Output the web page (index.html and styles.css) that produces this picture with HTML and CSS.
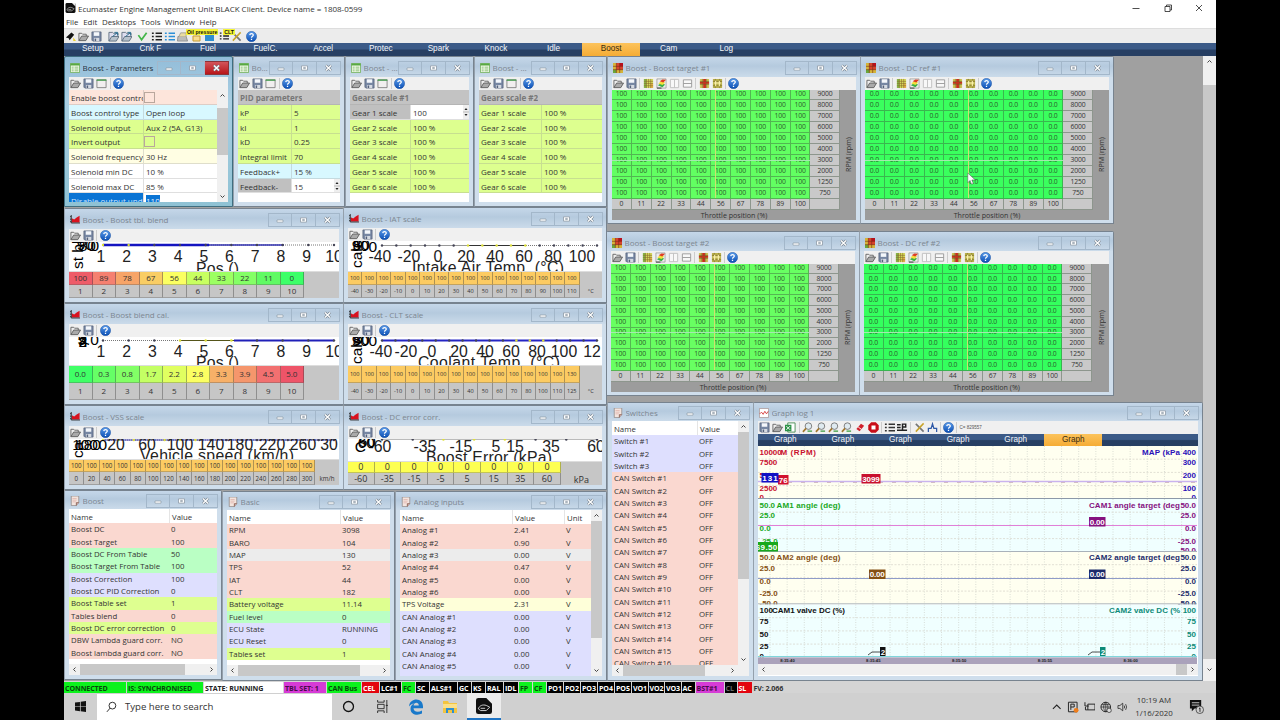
FILE: index.html
```html
<!DOCTYPE html>
<html lang="en">
<head>
  <meta charset="UTF-8">
  <title>Ecumaster Engine Management Unit BLACK Client</title>
  <link rel="stylesheet" href="styles.css">
</head>
<body>
  <svg class="defs" width="0" height="0">
    <defs>
      <linearGradient id="blueball" x1="0" y1="0" x2="0" y2="1"><stop offset="0" stop-color="#5a9bea"/><stop offset="1" stop-color="#0b4fb5"/></linearGradient>
    </defs>
    <symbol id="i-open" viewBox="0 0 12 12"><path d="M1 10.5V2.5h3l1 1h4v2" fill="#eee" stroke="#555" stroke-width=".9"/><path d="M1 10.5l3-5h7.5l-3 5z" fill="#aaa" stroke="#555" stroke-width=".9"/></symbol>
    <symbol id="i-save" viewBox="0 0 12 12"><path d="M1 1h10v10H2l-1-1z" fill="#7787a3" stroke="#556179" stroke-width=".8"/><path d="M3 1.3h6v4H3z" fill="#f4f7fb"/><path d="M3.2 7.5h5.8V11H3.2z" fill="#d5dae2"/><path d="M4 8.3h1.6V11H4z" fill="#55617a"/></symbol>
    <symbol id="i-form" viewBox="0 0 12 12"><path d="M1 2h10v8.5H1z" fill="#f1efef" stroke="#777" stroke-width=".9"/><path d="M.6 1.5h10.8v1.6H.6z" fill="#3f9d48"/></symbol>
    <symbol id="i-help" viewBox="0 0 12 12"><circle cx="6" cy="6" r="5.6" fill="url(#blueball)" stroke="#174c9b" stroke-width=".5"/><path d="M4.1 4.5C4.2 2.3 8 2.3 7.9 4.5 7.8 5.8 6 5.7 6 7.4M6 8.4v1.4" fill="none" stroke="#fff" stroke-width="1.4"/></symbol>
    <symbol id="i-grid" viewBox="0 0 12 12"><path d="M1 1h10v10H1z" fill="#d3d65a"/><path d="M1 1h3v10H1z" fill="#86b548"/><path d="M8 6h3v5H8z" fill="#e0b247"/><path d="M1 3.7h10M1 6h10M1 8.4h10M3.6 1v10M6 1v10M8.4 1v10" stroke="#8a6a2c" stroke-width=".6"/></symbol>
    <symbol id="i-3d" viewBox="0 0 12 12"><path d="M1 1h10v10H1z" fill="#eee" stroke="#777" stroke-width=".6"/><path d="M2 8l3-2 5 1-3 3z" fill="#3cae44"/><path d="M2.5 6l3-2.4L10 5 7 7.7z" fill="#f2e03a"/><path d="M4 3.5L7 1.6l4 .4-3 3z" fill="#de3d22"/><path d="M1 11h5" stroke="#333"/></symbol>
    <symbol id="i-cols" viewBox="0 0 12 12"><path d="M1.5 1.5h9v9h-9zM6 1.5v9" fill="#f8f8f8" stroke="#c0c0c0"/></symbol>
    <symbol id="i-rows" viewBox="0 0 12 12"><path d="M1.5 2h9v8h-9zM1.5 6h9" fill="#f8f8f8" stroke="#999"/></symbol>
    <symbol id="i-gridr" viewBox="0 0 12 12"><path d="M1 1h10v10H1z" fill="#cfc556"/><path d="M4.6 1h3v10h-3zM1 4h10v2.400H1z" fill="#c8301f"/><path d="M1 3.7h10M1 7h10M3.6 1v10M8.4 1v10" stroke="#6f5b22" stroke-width=".6"/></symbol>
    <symbol id="i-gridy" viewBox="0 0 12 12"><path d="M1 1h10v10H1z" fill="#b9b04a"/><path d="M3.6 1v10M8.4 1v10M1 3.7h10M1 8.4h10" stroke="#6f6222" stroke-width=".6"/><path d="M2 5.5h8M4 3v6M8 3v6" stroke="#fff6b0" stroke-width="1.2"/></symbol>
    <symbol id="i-params" viewBox="0 0 12 12"><path d="M.5.5h11v11H.5z" fill="#f3fbe9" stroke="#6eae56"/><path d="M.5.5h11V3H.5z" fill="#58a843"/><path d="M2 5h2.4M2 7.2h2.4M2 9.4h2.4M5.5 5H10M5.5 7.2H10M5.5 9.4H10" stroke="#77b565" stroke-width="1"/></symbol>
    <symbol id="i-table" viewBox="0 0 12 12"><path d="M0 0h12v12H0z" fill="#d4b43a"/><path d="M4 0h8v8H4z" fill="#d8432c"/><path d="M8 0h4v4H8z" fill="#b80f1d"/><path d="M0 8h4v4H0z" fill="#6ba73a"/><path d="M0 4h12M0 8h12M4 0v12M8 0v12" stroke="#7b2a18" stroke-width=".7"/></symbol>
    <symbol id="i-chart" viewBox="0 0 12 12"><path d="M2 4l3 1.500L8 3l3.500-2v8H2z" fill="#d8121f"/><path d="M1.500 0v9.600H12M0 2h1.500M0 5h1.500M0 8h1.500" stroke="#222" stroke-width="1" fill="none"/></symbol>
    <symbol id="i-list" viewBox="0 0 12 12"><path d="M1.5 0h9v8l-3 3.5h-6z" fill="#f3e4de" stroke="#857b78" stroke-width=".8"/><path d="M10.5 8H7.6v3.5" fill="#caa" stroke="#743" stroke-width=".8"/><path d="M3 3h5M3 5h5M3 7h4" stroke="#dba49b" stroke-width=".7"/></symbol>
    <symbol id="i-graph" viewBox="0 0 12 12"><path d="M.5.5h11v11H.5z" fill="#fff" stroke="#a99"/><path d="M1 7l2-2 2 2.6L7 4l2 3 2-3" fill="none" stroke="#d22b2b"/></symbol>
    <symbol id="i-xls" viewBox="0 0 12 12"><path d="M3 1h8v10H3z" fill="#fff" stroke="#4a8d55"/><path d="M0 3h7v7H0z" fill="#2c9247"/><path d="M1.5 4.5l4 4M5.5 4.5l-4 4" stroke="#fff"/></symbol>
    <symbol id="i-zoom" viewBox="0 0 12 12"><circle cx="7" cy="4.5" r="3.6" fill="#dfeaf0" stroke="#777"/><path d="M4.4 7L1 10.8" stroke="#a2772c" stroke-width="1.8"/><path d="M6 10h5" stroke="#3b9b3d" stroke-width="1.5"/></symbol>
    <symbol id="i-erase" viewBox="0 0 12 12"><path d="M1.5 7.5l5-5.5 3.5 2-5 6z" fill="#d01f2a"/><path d="M3.5 5.5L7 8" stroke="#fff"/></symbol>
    <symbol id="i-stop" viewBox="0 0 12 12"><path d="M3.5.3h5l3.2 3.2v5l-3.2 3.2h-5L.3 8.500v-5z" fill="#c90d17"/><path d="M3.8 3.800h4.400v4.400H3.800z" fill="#fff"/></symbol>
    <symbol id="i-bullets" viewBox="0 0 12 12"><path d="M1 2.500h2M1 6h2M1 9.500h2M5 2.500h7M5 6h7M5 9.500h7" stroke="currentColor" stroke-width="1.600"/></symbol>
    <symbol id="i-pmark" viewBox="0 0 12 12"><path d="M0 3h4M0 6h4M0 9h11M6 9V2.300h3.500v3.200H6" fill="none" stroke="#222" stroke-width="1.600"/></symbol>
    <symbol id="i-tools" viewBox="0 0 12 12"><path d="M2 2l8.500 8.500" stroke="#777" stroke-width="1.800"/><path d="M10.500 1.500L2 10.500" stroke="#c8a32a" stroke-width="1.600"/></symbol>
    <symbol id="i-node" viewBox="0 0 12 12"><path d="M1.500 11V7h3L6 2l1.500 5h3v4" fill="none" stroke="#315ba8" stroke-width="1.400"/></symbol>
    <symbol id="i-brush" viewBox="0 0 12 12"><path d="M1 7l6-5.500 3 2.500-5 6-1-2z" fill="#111"/><path d="M9 7l3 4H9z" fill="#e9cf2b"/></symbol>
    <symbol id="i-openb" viewBox="0 0 12 12"><path d="M1 11V1.500h4l1 1h5V5" fill="#dde" stroke="#567" stroke-width=".9"/><path d="M1 11l3-5h8l-3 5z" fill="#b7c2cc" stroke="#567" stroke-width=".9"/><path d="M5 6l5-4M7 1.500h3.500V5" stroke="#21688c" fill="none"/></symbol>
    <symbol id="i-check" viewBox="0 0 12 12"><path d="M1.500 4.500l3.500 5L10.500 2" fill="none" stroke="#43b649" stroke-width="1.900"/></symbol>
    <symbol id="i-log" viewBox="0 0 12 12"><path d="M1 6h9l1.500 5H.500z" fill="#bbb" stroke="#777" stroke-width=".7"/><path d="M2 6l2-4h6v4" fill="#e8dba5" stroke="#888" stroke-width=".7"/></symbol>
    <symbol id="i-ecu" viewBox="0 0 14 14"><rect width="14" height="14" rx="2" fill="#111"/><path d="M9 0h5v5z" fill="#eee"/><path d="M2 9.500c1-3 4-4 7-3l3 1.500-3 3H4zM4 9h4" fill="none" stroke="#ddd" stroke-width=".8"/></symbol>
  </svg>

  <div class="app">
    <div class="caption">
      <svg class="app-icon"><use href="#i-ecu"/></svg>
      <span class="caption-text">Ecumaster Engine Management Unit BLACK Client. Device name = 1808-0599</span>
      <div class="caption-buttons">
        <svg viewBox="0 0 10 10"><path d="M1.500 5.500h7" stroke="#222" stroke-width=".8"/></svg>
        <svg viewBox="0 0 10 10"><path d="M2 3.500h5v5H2zM3.500 3.500V2h5v5H7" fill="none" stroke="#222" stroke-width=".8"/></svg>
        <svg viewBox="0 0 10 10"><path d="M2 2l6 6M8 2L2 8" stroke="#222" stroke-width=".8"/></svg>
      </div>
    </div>
    <div class="menu"><span>File</span><span>Edit</span><span>Desktops</span><span>Tools</span><span>Window</span><span>Help</span></div>
    <div class="main-tools">
      <svg><use href="#i-brush"/></svg><svg><use href="#i-open"/></svg><svg><use href="#i-save"/></svg>
      <i></i><svg><use href="#i-openb"/></svg><svg><use href="#i-openb"/></svg><i></i>
      <svg><use href="#i-check"/></svg><svg class="dark"><use href="#i-bullets"/></svg><svg class="blue"><use href="#i-bullets"/></svg>
      <svg><use href="#i-log"/></svg>
      <div class="tagged"><svg viewBox="0 0 24 12"><path d="M1 6h7v5H1z" fill="#f8dc90" stroke="#c79b33"/><path d="M13 4h9v7h-9z" fill="#2f8fd0"/></svg><b>Oil pressure</b></div>
      <div class="tagged tag-clt"><svg viewBox="0 0 12 12" class="dark"><use href="#i-bullets"/></svg><b>CLT</b></div>
      <svg><use href="#i-tools"/></svg><i></i><svg class="help"><use href="#i-help"/></svg>
    </div>
    <div class="tabs">
      <span>Setup</span><span>Cnk F</span><span>Fuel</span><span>FuelC.</span><span>Accel</span><span>Protec</span><span>Spark</span><span>Knock</span><span>Idle</span><span class="on">Boost</span><span>Cam</span><span>Log</span>
    </div>
    <div class="workspace">
      <div class="desk" id="desk"></div>
      <div class="vscroll desk-scroll"></div>
    </div>
    <div class="status" id="status"></div>
    <div class="taskbar">
      <div class="start"><svg viewBox="0 0 12 12"><path d="M0 1.700L5.400 1v4.700H0zM6.200.900L12 0v5.700H6.200zM0 6.400h5.400v4.700L0 10.400zM6.200 6.400H12V12l-5.800-.8z" fill="#111"/></svg></div>
      <div class="search">
        <svg viewBox="0 0 12 12"><circle cx="7" cy="4.500" r="3.700" fill="none" stroke="#222"/><path d="M4.500 7.200L1 11.300" stroke="#222"/></svg>
        <span>Type here to search</span>
      </div>
      <div class="task"><svg viewBox="0 0 12 12"><circle cx="6" cy="6" r="4.600" fill="none" stroke="#111" stroke-width="1.200"/></svg></div>
      <div class="task"><svg viewBox="0 0 12 12"><path d="M1.500 4h6v4h-6zM1.500 0v2h6V0M1.500 12v-2h6v2M10 0v12M9 5h2" fill="none" stroke="#222" stroke-width=".8"/></svg></div>
      <div class="task"><svg class="big" viewBox="0 0 16 16"><path d="M1 7.500C1.500 2.500 5 .5 8.300.5c4.200 0 6.700 3 6.700 7v1.800H5.500c.2 4 5 4.300 8.500 2.300v3C9 17 2.500 15.500 2.500 9.700c0-2.700 1.600-4.400 3.700-5.200C4 4.700 2 6 1 7.500zM5.600 6.500h5.200c0-3.800-5-3.400-5.200 0z" fill="#1979ca"/></svg></div>
      <div class="task"><svg class="big" viewBox="0 0 16 16"><path d="M1 2h5l1 2h8v10H1z" fill="#f3c440"/><path d="M1 5h14v4H1z" fill="#fbe08a"/><path d="M4 9h8v5h-2v-3H6v3H4z" fill="#2f8fd0"/></svg></div>
      <div class="task active"><svg class="big" viewBox="0 0 14 14"><use href="#i-ecu"/></svg></div>
      <div class="tray">
        <svg viewBox="0 0 12 12"><path d="M2 8l4-4 4 4" fill="none" stroke="#222" stroke-width="1.100"/></svg>
        <svg viewBox="0 0 12 12"><path d="M1.500 1h9v10h-9zM4 9V3h3.500v3H4" fill="none" stroke="#222"/><circle cx="9.500" cy="9.500" r="2.500" fill="#ef7d1a"/></svg>
        <svg viewBox="0 0 12 12"><path d="M4 3h7.500v6H4zM1 1v4h4M1.500 6v3H4" fill="none" stroke="#222"/></svg>
        <svg viewBox="0 0 12 12"><circle cx="6" cy="6" r="5" fill="none" stroke="#222"/><path d="M1 6h10M6 1v10M6 1C3 4 3 8 6 11M6 1c3 3 3 7 0 10M2 3.500h8" fill="none" stroke="#222" stroke-width=".7"/><circle cx="9.500" cy="9.500" r="2.300" fill="#ddd" stroke="#222" stroke-width=".7"/></svg>
        <svg viewBox="0 0 12 12"><path d="M1 4.500h2L6 2v8L3 7.500H1zM7.500 4.500q1 1.500 0 3M9 3q2 3 0 6" fill="none" stroke="#222" stroke-width=".8"/></svg>
      </div>
      <div class="clock"><span>10:19 AM</span><span>1/16/2020</span></div>
      <div class="notify"><svg viewBox="0 0 16 16"><path d="M1 1h12v9H6l-3 3v-3H1z" fill="#111"/><path d="M3 4h8M3 6.500h8" stroke="#ccc"/><circle cx="11.500" cy="11.500" r="4" fill="#d0d0d0" stroke="#333" stroke-width=".8"/><path d="M10.600 10.300l1.100-.8v4.200" stroke="#222" fill="none"/></svg></div>
    </div>
  </div>
  <svg class="cursor" viewBox="0 0 12 18"><path d="M1 1v13l3-3 2 5 2.500-1-2-4.700H11z" fill="#fff" stroke="#555" stroke-width=".7"/></svg>
  <script src="script.js"></script>
</body>
</html>
```

FILE: styles.css
```css
* {
  box-sizing: border-box;
}
body {
  margin: 0;
  width: 1280px;
  height: 720px;
  overflow: hidden;
  background: #000;
  font-family: "Open Sans", "Noto Sans", sans-serif;
  font-size: 8px;
  color: #333;
}
.defs {
  position: absolute;
}
.app {
  width: 1152px;
  height: 720px;
  margin: 0 auto;
  display: flex;
  flex-direction: column;
  background: #fff;
}
.app > div {
  flex: none;
  white-space: nowrap;
}

/* caption, menu, toolbar */
.caption {
  height: 16px;
  display: flex;
  align-items: center;
  padding-left: 1px;
}
.app-icon {
  width: 11px;
  height: 10px;
}
.caption-text {
  margin-left: 2px;
  font-size: 8px;
  letter-spacing: -0.02px;
}
.caption-buttons {
  margin-left: auto;
  margin-right: 12px;
  display: flex;
  gap: 21.5px;
}
.caption-buttons svg {
  width: 10px;
  height: 10px;
}
.menu {
  height: 12px;
  line-height: 13px;
  padding-left: 2px;
  display: flex;
  gap: 4.7px;
  font-size: 7.9px;
}
.main-tools {
  height: 15px;
  background: #ececec;
  border-top: 1px solid #ddd;
  display: flex;
  align-items: center;
  gap: 2.2px;
  padding-left: 1px;
}
.main-tools > svg {
  width: 11px;
  height: 11px;
}
.main-tools i {
  width: 1px;
  height: 11px;
}
.main-tools > .help {
  margin-left: -2px;
}
.dark {
  color: #222;
}
.blue {
  color: #2c8fd8;
}
.tagged {
  position: relative;
  width: 24px;
  height: 12px;
  margin-left: 2px;
}
.tagged svg {
  width: 24px;
  height: 12px;
}
.tagged b {
  position: absolute;
  left: -6px;
  top: -1px;
  padding: 0 1px;
  background: #f4f435;
  font: bold 5.2px/6px "Liberation Sans", sans-serif;
  color: #111;
}
.tag-clt {
  width: 10px;
  margin-left: 1px;
}
.tag-clt svg {
  width: 10px;
}
.tag-clt b {
  left: 4px;
}
.tabs {
  height: 13px;
  display: flex;
  background: linear-gradient(#3b5a87 45%, #273f63 55%);
  font: 8.2px/11px "Liberation Sans", sans-serif;
  color: #f4f6fa;
}
.tabs span {
  width: 57.6px;
  text-align: center;
}
.tabs .on {
  background: linear-gradient(#fcc35c, #f5ac35);
  color: #3a2c10;
}

/* desktop and child windows */
.workspace {
  height: 625px;
  display: flex;
  background: #a0a0a0;
}
.desk {
  position: relative;
  flex: 1;
  overflow: hidden;
}
.win {
  position: absolute;
  display: flex;
  flex-direction: column;
  padding: 0 4px 4px;
  background: #cfdeec;
  border: 1px solid #77838f;
  border-left-color: #94a0ac;
  border-radius: 2px 2px 0 0;
  overflow: hidden;
}
.win-map {
  padding-bottom: 3px;
}
.win-active {
  background: linear-gradient(#93bdd9, #a8cee2 30%, #8fc2d4);
  border-color: #3f6e80;
}
.win-title {
  flex: none;
  display: flex;
  align-items: center;
  margin: 0 -4px;
  padding: 2px 3px 0 5px;
  background: linear-gradient(#c5d7e9, #b5cade 45%, #cbdbea);
  color: #7d8791;
  font-size: 8px;
  line-height: 12px;
}
.win-active .win-title {
  background: none;
  color: #2a3440;
}
.win-title > svg {
  flex: none;
  width: 10px;
  height: 10px;
}
.win-title > span {
  flex: 1;
  min-width: 0;
  margin-left: 2.5px;
  overflow: hidden;
  text-overflow: ellipsis;
  letter-spacing: -.04px;
}
.win-buttons {
  display: flex;
}
.win-buttons svg {
  width: 24px;
  height: 14px;
  border: 1px solid #a3b7ca;
  border-left-width: 0;
}
.win-buttons svg:first-child {
  border-left-width: 1px;
}
.win-active .win-buttons svg:last-child {
  background: linear-gradient(#d2555a, #b81519);
  border-color: #8c3338;
}
.tools {
  flex: none;
  height: 13px;
  background: #f0f0f0;
  display: flex;
  align-items: center;
  gap: 2.2px;
  padding-left: 1px;
}
.tools svg {
  width: 11px;
  height: 11px;
}
.tools i {
  width: 1px;
  height: 11px;
  background: #ccc;
}
.tools small {
  font: 4.5px "Liberation Sans", sans-serif;
  color: #555;
}
.body {
  flex: 1;
  min-height: 0;
  display: flex;
  overflow: hidden;
  background: #fff;
}

/* scrollbars */
.vscroll {
  flex: none;
  width: 11px;
  background: #f0f0f0;
  display: flex;
  flex-direction: column;
  align-items: center;
}
.vscroll svg, .hscroll svg {
  flex: none;
  width: 11px;
  height: 11px;
}
.thumb {
  background: #c8c8c8;
}
.vscroll .thumb {
  width: 100%;
}
.hscroll {
  flex: none;
  height: 11px;
  background: #f0f0f0;
  display: flex;
}
.spacer {
  flex: 1;
}
.desk-scroll {
  width: 13px;
}
.desk-scroll .thumb {
  flex: none;
  height: 574px;
  margin: 18px 0 5px;
}

/* parameter grids */
.params {
  flex: 1;
  min-width: 0;
}
.prow {
  display: flex;
  height: 14.75px;
  line-height: 15px;
  border-bottom: 1px solid rgba(150, 150, 150, .3);
}
.prow > span {
  overflow: hidden;
  padding-left: 2px;
}
.prow > span + span {
  flex: 1;
  border-left: 1px solid rgba(150, 150, 150, .3);
}
.phead {
  background: #c3c3c3;
  color: #777;
  font-weight: bold;
}
.lime { background: #ddff8f; }
.cyan { background: #d8f8ff; }
.rose { background: #fde5db; }
.cream { background: #fffee3; }
.edit > span:first-child { background: #c0c0c0; }
.edit > span:last-child { background: #fff; display: flex; justify-content: space-between; }
.edit > span:last-child svg { width: 6px; height: 14px; }
.picked { background: #0a74d4; color: #cfe6ff; }
.picked > span + span { background: #fff; }
.picked b { background: #0a74d4; color: #eaf4ff; font-weight: normal; }
.box {
  display: inline-block;
  width: 11px;
  height: 11px;
  margin-top: 2px;
  margin-left: -2px;
  border: 1px solid #b9a79d;
}

/* 3d maps */
.map {
  flex: 1;
  position: relative;
  display: flex;
  flex-direction: column;
  background: #9c9c9c;
  font-size: 6.8px;
}
.map-grid {
  flex: 1;
  display: grid;
  grid-template-columns: repeat(10, 19.85px) 30px;
  grid-template-rows: .9fr;
  grid-auto-rows: 1fr;
  justify-content: start;
}
.map-grid span {
  display: flex;
  align-items: center;
  justify-content: center;
  border-right: 1px solid rgba(60, 80, 60, .42);
  border-bottom: 1px solid rgba(60, 80, 60, .42);
  color: #2c5c2c;
  overflow: hidden;
  line-height: 8px;
  letter-spacing: -.15px;
}
.map-grid .axis {
  background: #c9c9c9;
  color: #333;
}
.map-foot {
  height: 10.5px;
  line-height: 11px;
  text-align: center;
  font-size: 7.1px;
}
.map-side {
  position: absolute;
  right: 1px;
  top: 0;
  bottom: 0;
  width: 13px;
  writing-mode: vertical-rl;
  transform: rotate(180deg);
  text-align: center;
  line-height: 13px;
  font-size: 7.1px;
}
.cross-v {
  position: absolute;
  left: 103px;
  top: 0;
  width: 1px;
  bottom: 22px;
  background: #d0e070;
}
.cross-h {
  position: absolute;
  left: 0;
  top: 53.5%;
  height: 1px;
  width: 198px;
  background: #a5e8b0;
}

/* 2d curves */
.curve {
  flex: 1;
  display: flex;
  flex-direction: column;
  background: #fff;
}
.curve svg {
  flex: 1;
  min-height: 0;
  width: 100%;
}
.curve-table {
  display: grid;
  flex: none;
  background: #c6c6c6;
  border-top: 1px solid #ddd;
}
.curve-table span {
  display: flex;
  align-items: center;
  justify-content: center;
  border-right: 1px solid rgba(60, 60, 60, .4);
  border-bottom: 1px solid rgba(90, 90, 90, .35);
  overflow: hidden;
}
.curve-table .unit {
  border: 0;
}

/* channel lists */
.list {
  flex: 1;
  min-width: 0;
  min-height: 0;
  display: flex;
  flex-direction: column;
  overflow: hidden;
}
.list-row {
  flex: 1;
  min-height: 0;
  display: flex;
}
.lhead, .lrow {
  display: grid;
  flex: none;
  height: 12.35px;
  line-height: 12px;
  font-size: 7.8px;
}
.lhead {
  height: 14.2px;
  line-height: 16px;
}
.lhead span, .lrow span {
  padding-left: 2px;
}
.lhead span + span {
  border-left: 1px solid #e5e5e5;
}
.r { background: #fad8d0; }
.g { background: #baffc4; }
.b { background: #dedffe; }
.l { background: #deff90; }
.w { background: #ececec; }
.y { background: #feffd9; }

/* log graph */
.graph {
  flex: 1;
  display: flex;
  flex-direction: column;
}
.graph .tabs {
  flex: none;
  height: 12px;
}
.graph .tabs span:first-child {
  margin-left: -1.5px;
}
.graph > svg {
  width: 439px;
  height: 218px;
}
.graph text {
  font-family: "Liberation Sans", sans-serif;
  font-weight: bold;
  font-size: 8px;
}

/* status strip and taskbar */
.status {
  height: 12px;
  padding-top: 1px;
  background: #d4d4d4;
  display: flex;
  gap: 1px;
}
.status span {
  flex: none;
  height: 11px;
  overflow: hidden;
  padding-left: 1px;
  font: bold 7.1px/12px "Open Sans", sans-serif;
  letter-spacing: -.1px;
}
.s-g { background: #0cf21c; color: #064a0a; }
.s-w { background: #fff; color: #222; }
.s-p { background: #d63bd6; color: #4a0b4a; }
.s-r { background: #e3050f; color: #fff; }
.s-k { background: #000; color: #fff; }
.s-d { background: #000; color: #666; }
.s-n { color: #333; }
.taskbar {
  height: 27px;
  background: #d0d0d0;
  display: flex;
  align-items: center;
}
.start {
  width: 33px;
  display: flex;
  justify-content: center;
}
.start svg {
  width: 11px;
  height: 11px;
}
.search {
  width: 235px;
  height: 26px;
  background: #fff;
  display: flex;
  align-items: center;
  gap: 8px;
  padding-left: 9px;
  font-size: 9.6px;
}
.search svg {
  width: 11px;
  height: 12px;
}
.task {
  width: 33.8px;
  height: 27px;
  display: flex;
  align-items: center;
  justify-content: center;
}
.task svg {
  width: 13px;
  height: 13px;
}
.task .big {
  width: 16px;
  height: 16px;
}
.active {
  background: #ececec;
  border-bottom: 2px solid #1f74c4;
}
.tray {
  margin-left: auto;
  display: flex;
  gap: 5px;
}
.tray svg {
  width: 11.5px;
  height: 12px;
}
.clock {
  width: 52px;
  display: flex;
  flex-direction: column;
  align-items: center;
  line-height: 13px;
  font-size: 7.9px;
}
.notify {
  width: 36px;
  padding-right: 4px;
  display: flex;
  justify-content: center;
}
.notify svg {
  width: 15px;
  height: 15px;
}
.cursor {
  position: absolute;
  left: 967px;
  top: 172px;
  width: 9px;
  height: 14px;
}
```

FILE: script.js
```javascript
const desk = document.getElementById('desk');
const use = (id) => `<svg><use href="#i-${id}"/></svg>`;
const arrow = (d) => `<svg viewBox="0 0 11 11"><path d="${d}" fill="none" stroke="#444"/></svg>`;
const UP = arrow('M3.500 6.500l2-2 2 2');
const DOWN = arrow('M3.500 4.500l2 2 2-2');
const LEFT = arrow('M6.500 3.500l-2 2 2 2');
const RIGHT = arrow('M4.500 3.500l2 2-2 2');
const spin = '<svg viewBox="0 0 6 14"><path d="M0 0h6v14H0z" fill="#eee"/><path d="M0 7h6" stroke="#bbb"/><path d="M1.500 5L3 3l1.500 2zM1.500 9L3 11l1.500-2z" fill="#222"/></svg>';

// x, y are screen coordinates of the frame; the desk starts at 64, 56
function win(x, y, w, h, titleH, icon, title, tools, body, cls = '') {
  const bar = tools ? `<div class="tools">${tools}</div>` : '';
  desk.insertAdjacentHTML('beforeend', `
    <div class="win ${cls}" style="left:${x - 64}px;top:${y - 56}px;width:${w}px;height:${h}px">
      <div class="win-title" style="height:${titleH}px">${use(icon)}<span>${title}</span>
        <div class="win-buttons">
          <svg viewBox="0 0 24 14"><path d="M8.500 7h7v2.500h-7z" fill="#fff" stroke="#8b98a5" stroke-width=".8"/></svg>
          <svg viewBox="0 0 24 14"><path d="M8.500 4.500h7v5h-7zM11 6.300h2v1.400h-2z" fill="#fff" stroke="#8b98a5" stroke-width=".9"/></svg>
          <svg viewBox="0 0 24 14"><path d="M9 4l6 6M15 4l-6 6" stroke="#77838f" stroke-width="3"/><path d="M9 4l6 6M15 4l-6 6" stroke="#fff" stroke-width="1.500"/></svg>
        </div>
      </div>${bar}<div class="body">${body}</div>
    </div>`);
}

const paramTools = use('open') + use('save') + use('form') + '<i></i>' + use('help');
const curveTools = use('open') + use('save') + '<i></i>' + use('help');
const mapTools = use('open') + use('save') + '<i></i>' + use('grid') + use('3d') + use('cols') + use('rows') +
  '<i></i>' + use('gridr') + use('gridy') + '<i></i>' + use('help');

function params(rows, col, scroll = '') {
  return '<div class="params">' + rows.map(([cls, name, value]) => value === undefined
    ? `<div class="prow phead"><span>${name}</span></div>`
    : `<div class="prow ${cls}"><span style="width:${col}px">${name}</span><span>${value}${cls === 'edit' ? spin : ''}</span></div>`
  ).join('') + '</div>' + scroll;
}

const vscroll = (before, size) => `<div class="vscroll">${UP}<div class="thumb" style="height:${size}px;margin-top:${before}px"></div><div class="spacer"></div>${DOWN}</div>`;

win(64, 56, 169, 151, 20, 'params', 'Boost - Parameters', paramTools, params([
  ['rose', 'Enable boost control', '<i class="box"></i>'],
  ['cyan', 'Boost control type', 'Open loop'],
  ['lime', 'Solenoid output', 'Aux 2 (5A, G13)'],
  ['lime', 'Invert output', '<i class="box"></i>'],
  ['cream', 'Solenoid frequency', '30 Hz'],
  ['', 'Solenoid min DC', '10 %'],
  ['', 'Solenoid max DC', '85 %'],
  ['picked', 'Disable output under', '<b>110</b>']
], 74, vscroll(7, 47)), 'win-active');
win(233, 56, 112, 151, 20, 'params', 'Boost - PID', paramTools, params([
  ['', 'PID parameters'], ['lime', 'kP', '5'], ['lime', 'kI', '1'], ['lime', 'kD', '0.25'],
  ['lime', 'Integral limit', '70'], ['cyan', 'Feedback+', '15 %'], ['edit', 'Feedback-', '15']
], 53));
const gears = [2, 3, 4, 5, 6].map(n => ['lime', `Gear ${n} scale`, '100 %']);
win(345, 56, 129, 151, 20, 'params', 'Boost - Gears scale', paramTools,
  params([['', 'Gears scale #1'], ['edit', 'Gear 1 scale', '100'], ...gears], 60));
win(474, 56, 133, 151, 20, 'params', 'Boost - Gears scale', paramTools,
  params([['', 'Gears scale #2'], ['lime', 'Gear 1 scale', '100 %'], ...gears], 62));

function map(value, color) {
  const rpm = [9000, 8000, 7000, 6000, 5000, 4000, 3000, 2000, 1250, 750];
  let cells = rpm.map(r => `<span style="background:${color}">${value}</span>`.repeat(10) + `<span class="axis">${r}</span>`).join('');
  cells += [0, 11, 22, 33, 44, 56, 67, 78, 89, 100, ''].map(t => `<span class="axis">${t}</span>`).join('');
  return `<div class="map"><div class="map-grid">${cells}</div><div class="map-foot">Throttle position (%)</div>
    <div class="map-side">RPM (rpm)</div><div class="cross-v"></div><div class="cross-h"></div></div>`;
}
win(607, 56, 254, 168, 20, 'table', 'Boost - Boost target #1', mapTools, map('100', '#62ff62'), 'win-map');
win(860, 56, 254, 168, 20, 'table', 'Boost - DC ref #1', mapTools, map('0.0', '#3aff5e'), 'win-map');
win(606, 231, 254, 165, 19, 'table', 'Boost - Boost target #2', mapTools, map('100', '#68ff62'), 'win-map');
win(859, 231, 255, 165, 19, 'table', 'Boost - DC ref #2', mapTools, map('0.0', '#34ff5e'), 'win-map');

// svg coordinates inside a curve are pixels from its top left corner
function curve(o) {
  const label = (t, x) => `<text x="${x}" y="${o.base}" font-size="15.800" text-anchor="middle">${t}</text>`;
  let s = `<svg font-family="Liberation Sans" fill="#222"><path d="M34 ${o.line}H${o.end}" stroke="#777" stroke-dasharray="1 1"/>`;
  o.strokes.forEach(([a, b, c, t]) => { s += `<path d="M${a} ${o.line}H${b}" stroke="${c}" stroke-width="${t || 1.500}"/>`; });
  for (let i = 0; i < o.n; i++) {
    const x = 34 + (o.end - 34) * i / (o.n - 1);
    s += `<circle cx="${x}" cy="${o.line}" r="1.200" fill="${o.yellow.includes(i) ? '#dddf3a' : '#445'}"/>`;
  }
  s += o.labels.map(l => label(...l)).join('');
  s += `<text x="${o.name[1]}" y="${o.nameY}" font-size="15.800" textLength="${o.name[2]}">${o.name[0]}</text>`;
  o.blob.forEach(([t, x, y]) => { s += `<text x="${x}" y="${y}" font-size="15.500" text-anchor="end" fill="#000">${t}</text>`; });
  s += `<text transform="translate(13.500 ${o.sideY || 27}) rotate(-90)" font-size="15.500" fill="#000">${o.side}</text></svg>`;
  const cols = `repeat(${o.values.length}, ${o.cw}px) 1fr`;
  s += `<div class="curve-table" style="grid-template-columns:${cols};grid-template-rows:${o.rows[0]}px ${o.rows[1]}px;font-size:${o.fs}px">`;
  s += o.values.map((v, i) => `<span style="background:${o.colors[i] || o.colors[0]}">${v}</span>`).join('') + '<span class="unit"></span>';
  s += o.axis.map(v => `<span>${v}</span>`).join('') + `<span class="unit">${o.unit || ''}</span></div>`;
  return `<div class="curve">${s}</div>`;
}

const heat = ['#ee5c68', '#f58070', '#f7a468', '#f9cd64', '#fbff62', '#c8ff60', '#9cff62', '#84ff66', '#60fa64', '#3cff68'];
const posLabels = [1, 2, 3, 4, 5, 6, 7, 8, 9].map((n, i) => [n, 32 + i * 25.700]).concat([[10, 265]]);
const ten = [1, 2, 3, 4, 5, 6, 7, 8, 9, 10];
const hundred = Array(16).fill(100);

win(64, 208, 280, 95, 20, 'chart', 'Boost - Boost tbl. blend', curveTools, curve({
  line: 3, end: 265, n: 10, yellow: [0, 1], strokes: [[34, 140, '#1414c0', 2.500], [140, 215, '#3030b0', 1.500]], base: 20,
  labels: posLabels, name: ['Pos ()', 127, 43], nameY: 31.500, blob: [['80', 27, 9], ['90', 25, 8], ['0', 30, 9]], side: 'st bl',
  values: [100, 89, 78, 67, 56, 44, 33, 22, 11, 0], axis: ten, colors: heat, cw: 23.500, rows: [13, 13.500], fs: 8
}));
win(64, 303, 280, 102, 20, 'chart', 'Boost - Boost blend cal.', curveTools, curve({
  line: 3.500, end: 265, n: 10, yellow: [3, 4, 5], strokes: [[112, 165, '#55551a', 1.200], [165, 265, '#2020b8', 2]], base: 20,
  labels: posLabels, name: ['Pos ()', 127, 43], nameY: 31, blob: [['.0', 30, 8], ['4', 19, 9], ['2', 18, 10], ['8', 18, 10], ['5', 17, 8]], side: '',
  values: ['0.0', 0.3, 0.8, 1.7, 2.2, 2.8, 3.3, 3.9, 4.5, '5.0'], axis: ten,
  colors: ['#40ff66', '#66ff66', '#82ff66', '#c4ff64', '#e0ff60', '#fbff62', '#f7b068', '#f5966c', '#f27070', '#ee5468'], cw: 23.500, rows: [16.500, 17.500], fs: 8
}));
win(343, 207, 264, 96, 20, 'chart', 'Boost - IAT scale', curveTools, curve({
  line: 4.500, end: 249, n: 16, yellow: [6, 7, 8, 9, 10], strokes: [[34, 119, '#999', 1], [119, 177, '#333', 1]], base: 21,
  labels: [[-40, 32], [-20, 61], [0, 90], [20, 118], [40, 147], [60, 176], [80, 205], [100, 234]],
  name: ['Intake Air Temp. (°C)', 64, 152], nameY: 32, blob: [['80', 22, 9], ['90', 21, 10], ['0', 29, 11]], side: 'cale',
  values: hundred, axis: [-40, -30, -20, -10, 0, 10, 20, 30, 40, 50, 60, 70, 80, 90, 100, 110], unit: '°C',
  colors: ['#fccb62'], cw: 14.470, rows: [13, 13.500], fs: 5.600
}));
win(343, 303, 264, 102, 20, 'chart', 'Boost - CLT scale', curveTools, curve({
  line: 3.500, end: 249, n: 17, yellow: [10, 11, 12], strokes: [[34, 249, '#2424c4', 2.200]], base: 20,
  labels: [[-40, 33], [-20, 58], [0, 84], [20, 111], [40, 137], [60, 163], [80, 189], [100, 216], [12, 244]],
  name: ['Coolant Temp. (°C)', 70, 142], nameY: 30.500, blob: [['80', 22, 8], ['90', 21, 9], ['0', 29, 9]], side: 'cale',
  values: hundred.slice(0, 15).concat([130]), axis: [-40, -30, -20, -10, 0, 10, 20, 30, 40, 50, 60, 70, 80, 100, 110, 125], unit: '°C',
  colors: ['#fccb62'], cw: 14.470, rows: [16.500, 17.500], fs: 5.600
}));
win(64, 405, 280, 85, 20, 'chart', 'Boost - VSS scale', curveTools, curve({
  line: 1, end: 265, n: 16, yellow: [0, 1, 2, 3, 4, 5, 6], strokes: [[34, 265, '#3a3ab0', 1]], base: 10.500,
  labels: [[20, 47], [60, 78], [100, 111], [140, 142], [180, 171], [220, 203], [260, 234], [30, 260]],
  name: ['Vehicle speed (km/h)', 71, 154], nameY: 22, blob: [['100', 29, 10.500], ['180', 32, 10.500], ['0', 38, 10.500]], side: 'ca', sideY: 19,
  values: hundred, axis: [0, 20, 40, 60, 80, 100, 120, 140, 160, 180, 200, 220, 240, 260, 280, 300], unit: 'km/h',
  colors: ['#fccb62'], cw: 15.400, rows: [12.500, 13], fs: 6.200
}));
win(343, 405, 264, 85, 20, 'chart', 'Boost - DC error corr.', curveTools, curve({
  line: .5, end: 249, n: 8, yellow: [2, 3, 4], strokes: [[34, 249, '#bbb', 1]], base: 13,
  labels: [['-60', 32], ['-35', 77], ['-15', 113], [5, 148], [15, 167], [35, 203], [60, 248]],
  name: ['Boost Error (kPa)', 78, 126], nameY: 24, blob: [['50', 28, 8], ['60', 27, 9], ['C', 18, 13]], side: '',
  values: Array(8).fill(0), axis: [-60, -35, -15, -5, 5, 15, 35, 60], unit: 'kPa',
  colors: ['#fdff52'], cw: 26.600, rows: [11.500, 12], fs: 9
}));

function list(cols, head, rows, right = '', bottom = '') {
  const grid = `style="grid-template-columns:${cols}"`;
  const line = (cls, cells) => `<div class="${cls}" ${grid}>${cells.map(c => `<span>${c}</span>`).join('')}</div>`;
  return `<div class="list"><div class="list-row"><div class="list">${line('lhead', head)}${rows.map(([c, ...v]) => line('lrow ' + c, v)).join('')}</div>${right}</div>${bottom}</div>`;
}
const hscroll = (size, extra = '') => `<div class="hscroll">${LEFT}<div class="thumb" style="width:${size}px"></div><div class="spacer"></div>${RIGHT}${extra}</div>`;

win(64, 490, 158, 190, 18, 'list', 'Boost', '', list('100px 1fr', ['Name', 'Value'], [
  ['r', 'Boost DC', 0], ['r', 'Boost Target', 100], ['g', 'Boost DC From Table', 50], ['g', 'Boost Target From Table', 100],
  ['b', 'Boost Correction', 100], ['b', 'Boost DC PID Correction', 0], ['l', 'Boost Table set', 1], ['r', 'Tables blend', 0],
  ['l', 'Boost DC error correction', 0], ['r', 'DBW Lambda guard corr.', 'NO'], ['r', 'Boost lambda guard corr.', 'NO']
], '', hscroll(105)));
win(222, 491, 173, 190, 18, 'list', 'Basic', '', list('113px 1fr', ['Name', 'Value'], [
  ['r', 'RPM', 3098], ['r', 'BARO', 104], ['w', 'MAP', 130], ['r', 'TPS', 52], ['r', 'IAT', 44], ['r', 'CLT', 182],
  ['l', 'Battery voltage', 11.14], ['g', 'Fuel level', 0], ['b', 'ECU State', 'RUNNING'], ['b', 'ECU Reset', 0], ['l', 'Tables set', 1]
], '', hscroll(122)));
const can = [1, 2, 3, 4, 5, 6].map(n => ['b', `CAN Analog #${n}`, '0.00', 'V']);
win(395, 491, 212, 190, 18, 'list', 'Analog inputs', '', list('112px 52px 1fr', ['Name', 'Value', 'Unit'], [
  ['r', 'Analog #1', '2.41', 'V'], ['r', 'Analog #2', '0.90', 'V'], ['w', 'Analog #3', '0.00', 'V'], ['r', 'Analog #4', '0.47', 'V'],
  ['r', 'Analog #5', '0.00', 'V'], ['r', 'Analog #6', '0.00', 'V'], ['y', 'TPS Voltage', '2.31', 'V'], ...can
], vscroll(0, 117)));
const switches = [1, 2, 3].map(n => ['b', `Switch #${n}`, 'OFF'])
  .concat(Array.from({ length: 16 }, (_, i) => ['r', `CAN Switch #${i + 1}`, 'OFF']));
win(607, 402, 147, 279, 18, 'list', 'Switches', '', list('85px 1fr', ['Name', 'Value'], switches, vscroll(0, 147), hscroll(82, '<div style="width:11px"></div>')));

function graph() {
  const t = (s, x, y, c, len, anchor = 'start') => `<text x="${x}" y="${y}" fill="${c}" text-anchor="${anchor}" ${len ? `textLength="${len}"` : ''}>${s}</text>`;
  const tag = (s, x, y, w, c) => `<rect x="${x}" y="${y}" width="${w}" height="9.500" fill="${c}"/>` + t(s, x + .8, y + 7.800, '#fff', w - 1.600);
  const bands = [
    [0, '#fffff0', '#c8102e', '#2a10b8', ['10000', '7500', '5000', '2500', '0'], [400, 300, 200, 100, 0], 'M (RPM)', 'MAP (kPa'],
    [53, '#f0ffff', '#18a81c', '#85107f', ['50.0', '25.0', '0.0', '-25.0', '-50.0'], ['50.0', '25.0', '0.0', '-25.0', '-50.0'], 'AM1 angle (deg)', 'CAM1 angle target (deg'],
    [105.500, '#fffff0', '#855012', '#1b2b6b', ['50.0', '25.0', '0.0', '-25.0', '-50.0'], ['50.0', '25.0', '0.0', '-25.0', '-50.0'], 'AM2 angle (deg)', 'CAM2 angle target (deg'],
    [158.500, '#f0ffff', '#111', '#0d8a78', [100, 75, 50, 25, 0], [100, 75, 50, 25, 0], 'CAM1 valve DC (%)', 'CAM2 valve DC (%']
  ];
  const leftX = [22.500, 18.500, 18.500, 14];
  const leftW = [35.500, 64, 64, 73];
  const rightW = [38, 91, 91, 71];
  let s = '<svg>';
  bands.forEach(([y, bg, lc, rc, l, r, ln, rn], k) => {
    s += `<svg y="${y}" width="439" height="53"><rect width="439" height="53" fill="${bg}"/>`;
    for (let x = 12; x < 439; x += 17.150) s += `<path d="M${x} 0V53" stroke="#ccd0c8" stroke-width=".7" stroke-dasharray="1 1.500"/>`;
    for (let j = 1; j < 4; j++) s += `<path d="M0 ${j * 13.200}H439" stroke="#d6d2c8" stroke-width=".7" stroke-dasharray="2 1.500"/>`;
    [8.700, 19, 32, 44.500, 54].forEach((ty, j) => {
      s += t(l[j], 1.500, ty, lc) + t(r[j], 438, ty, rc, 0, 'end');
    });
    s += t(ln, leftX[k], 8.700, lc, leftW[k]) + t(rn, 422, 8.700, rc, rightW[k], 'end');
    s += '<path d="M0 52.500H439" stroke="#8c98a8"/></svg>';
  });
  s += '<path d="M0 35.500H439" stroke="#c9b3ee" stroke-width="1.300"/><path d="M30 36.500H439" stroke="#b9a" stroke-width=".6" stroke-dasharray="4 9"/>';
  s += '<path d="M0 79.500H439" stroke="#e07fd8"/><path d="M0 132.500H439" stroke="#8f9cc8"/>';
  s += tag('76', 20, 29, 10.500, '#d2102e') + tag('131', 3.500, 27, 17, '#1010c4') + tag('3099', 103.500, 28, 19, '#c8102e');
  s += tag('69.50', -3, 96, 23, '#18a81c') + tag('0.00', 331, 71, 16.500, '#85107f');
  s += tag('0.00', 111, 123.500, 16.500, '#855012') + tag('0.00', 331, 123.500, 16.500, '#1b2b6b');
  s += '<path d="M110 209l4-3h9M330 209l4-3h9" fill="none" stroke="#222" stroke-width=".8"/>';
  s += tag('2', 122, 201, 5.500, '#111') + tag('2', 342, 201, 5.500, '#0d8a78');
  s += '<path d="M0 210.500H439" stroke="#7fd6dc"/><rect y="211.500" width="439" height="6.500" fill="#aaa2bb"/>';
  ['8:35:40', '8:35:45', '8:35:50', '8:35:55', '8:36:00'].forEach((v, i) => {
    s += `<text x="${29.500 + i * 85.800}" y="216.400" style="font-size:4.200px" text-anchor="middle" fill="#222">${v}</text>`;
  });
  const tabs = '<span>Graph</span>'.repeat(5) + '<span class="on">Graph</span>';
  return `<div class="graph"><div class="tabs">${tabs}</div>${s}</svg><div class="hscroll">${LEFT}<div class="spacer"></div><div class="thumb" style="width:11px"></div>${RIGHT}</div></div>`;
}
win(753, 402, 450, 279, 18, 'graph', 'Graph log 1',
  use('save') + use('open') + use('xls') + '<i></i>' + use('zoom').repeat(4) + use('erase') + use('stop') + '<i></i>' +
  use('bullets') + use('pmark') + '<i></i>' + use('tools') + use('node') + '<i></i>' + use('help') + '<i></i><small>C= 829557</small>', graph());

// status cells: text, width, colour
const cells = [
  ['CONNECTED', 62, 'g'], ['IS: SYNCHRONISED', 76, 'g'], ['STATE: RUNNING', 79, 'w'], ['TBL SET: 1', 42, 'p'], ['CAN Bus', 34, 'g'],
  ['CEL', 17, 'r'], ['LC#1', 21, 'k'], ['FC', 13, 'g'], ['SC', 13, 'k'], ['ALS#1', 27, 'k'], ['GC', 13, 'k'], ['KS', 13, 'k'],
  ['RAL', 17, 'k'], ['IDL', 14, 'k'], ['FP', 13, 'g'], ['CF', 13, 'g'], ['PO1', 16, 'k'], ['PO2', 16, 'k'], ['PO3', 16, 'k'],
  ['PO4', 16, 'k'], ['PO5', 16, 'k'], ['VO1', 15.500, 'k'], ['VO2', 15.500, 'k'], ['VO3', 15.500, 'k'], ['AC', 13, 'k'],
  ['BST#1', 28, 'p'], ['CL', 12, 'd'], ['SL', 14, 'r'], ['FV: 2.066', 38, 'n']
];
document.getElementById('status').innerHTML = cells.map(([t, w, c]) => `<span class="s-${c}" style="width:${w}px">${t}</span>`).join('');
document.querySelector('.desk-scroll').innerHTML = UP + '<div class="thumb"></div>' + DOWN;
```
